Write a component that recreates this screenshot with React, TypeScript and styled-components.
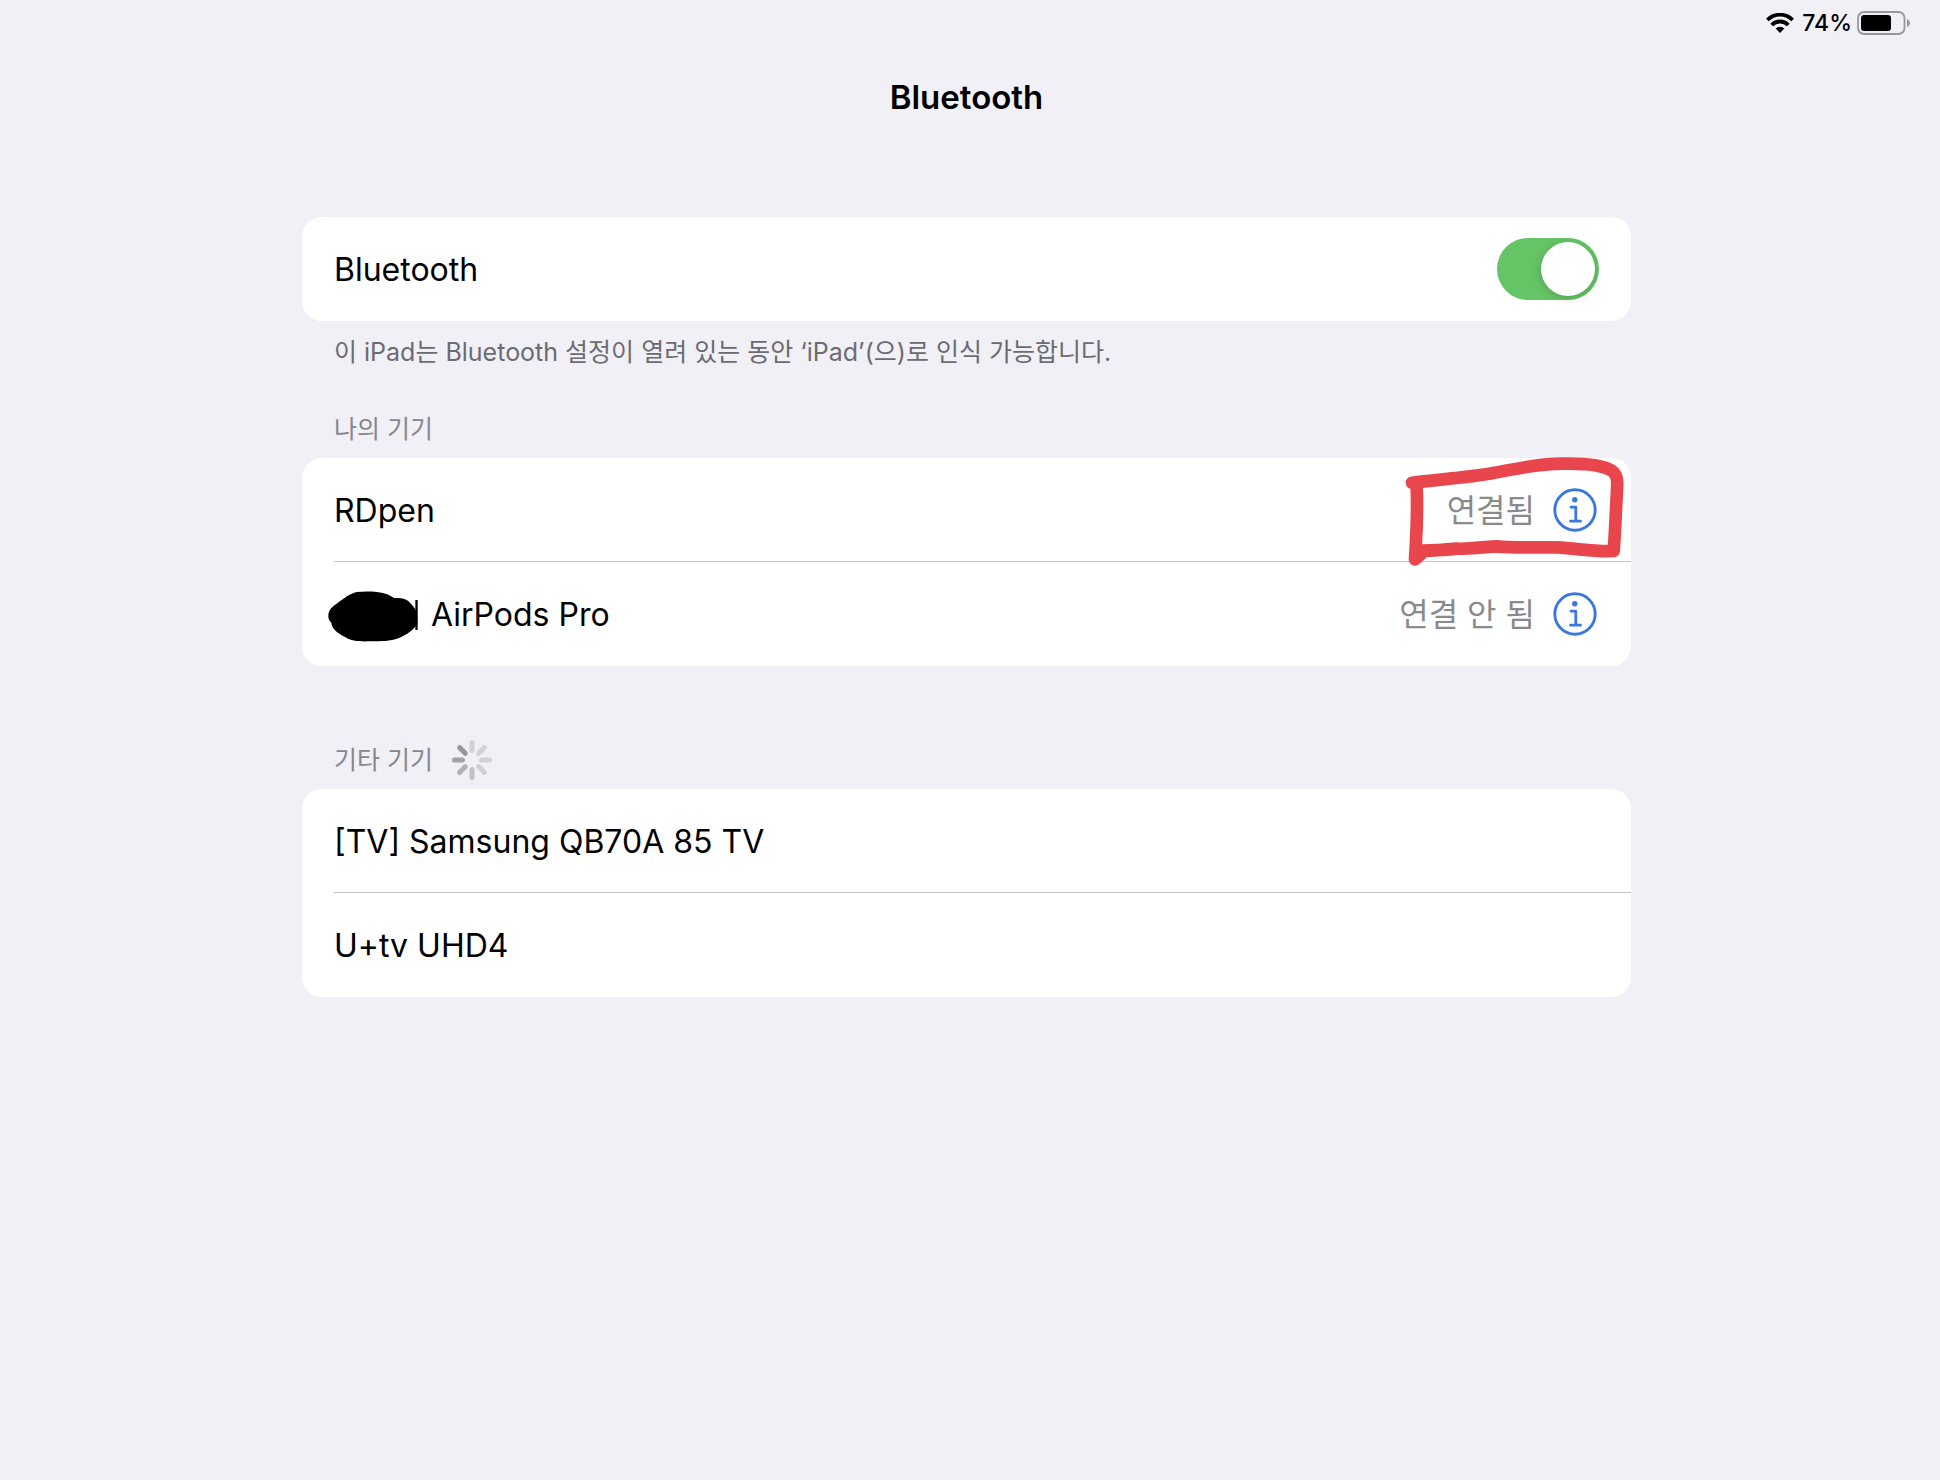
import React, { useState } from 'react';
import styled, { createGlobalStyle } from 'styled-components';

const GlobalStyle = createGlobalStyle`
  *, *::before, *::after { box-sizing: border-box; }
  body {
    margin: 0;
    background: #f1f0f6;
    color: #000;
    font-family: Inter, "Noto Sans CJK KR", sans-serif;
  }
`;

const Page = styled.div`
  min-height: 100vh;
  display: flex;
  flex-direction: column;
`;

const StatusBar = styled.div`
  height: 46px;
  padding-right: 29px;
  display: flex;
  align-items: center;
  justify-content: flex-end;
  font-size: 23px;
  line-height: 28px;
  font-weight: 500;
`;

const WifiIcon = styled.svg`
  width: 28px;
  height: 20px;
  margin-right: 8px;
`;

const BatteryIcon = styled.svg`
  width: 54px;
  height: 24px;
  margin-left: 5px;
`;

const Content = styled.main`
  width: 100%;
  padding-right: 7px;
  display: flex;
  flex-direction: column;
  align-items: center;
`;

const Title = styled.h1`
  margin: 0;
  height: 102px;
  line-height: 102px;
  font-size: 33px;
  font-weight: 600;
`;

const Settings = styled.div`
  width: 100%;
  max-width: 1329px;
  padding-top: 69px;
`;

const Section = styled.section<{ $gap?: number }>`
  margin-top: ${(p) => p.$gap ?? 0}px;
`;

const SectionLabel = styled.h2`
  margin: 0;
  height: 58px;
  padding-left: 32px;
  display: flex;
  align-items: center;
  gap: 19px;
  color: #87868c;
  font-size: 25px;
  line-height: 32px;
  font-weight: 400;
`;

const Footnote = styled.p`
  margin: 0;
  padding: 0 32px;
  line-height: 62px;
  color: #6c6b71;
  font-size: 25px;
`;

const Card = styled.ul`
  margin: 0;
  padding: 0;
  list-style: none;
  background: #fff;
  border-radius: 20px;
`;

const Row = styled.li`
  position: relative;
  height: 104px;
  padding: 0 32px;
  display: flex;
  align-items: center;
  justify-content: space-between;
  font-size: 32px;
  line-height: 39px;

  & + &::before {
    content: "";
    position: absolute;
    top: -1px;
    left: 32px;
    right: 0;
    height: 1px;
    background: #c4c4c7;
  }
`;

const Name = styled.span`
  display: flex;
  align-items: center;
  gap: 11px;
`;

const Trailing = styled.div`
  display: flex;
  align-items: center;
  gap: 18px;
  padding-right: 2px;
  color: #8a8a8d;
`;

const Switch = styled.input`
  appearance: none;
  width: 102px;
  height: 62px;
  margin: 0;
  padding: 4px;
  display: flex;
  justify-content: flex-start;
  border-radius: 31px;
  background: #e9e9eb;
  cursor: pointer;

  &::before {
    content: "";
    width: 54px;
    height: 54px;
    border-radius: 50%;
    background: #fff;
    box-shadow: 0 2px 10px rgba(0, 0, 0, 0.18);
  }

  &:checked {
    justify-content: flex-end;
    background: #65c466;
  }
`;

const InfoButton = styled.button`
  display: flex;
  padding: 0;
  border: 0;
  background: none;
  color: #3b78dc;
  cursor: pointer;

  svg {
    width: 44px;
    height: 44px;
  }
`;

const SpinnerIcon = styled.svg`
  width: 40px;
  height: 40px;
`;

const Redaction = styled.svg`
  width: 93px;
  height: 55px;
  margin-left: -7px;
`;

const Marker = styled.svg`
  position: absolute;
  z-index: 1;
  top: -3px;
  right: 1px;
  width: 225px;
  height: 115px;
  pointer-events: none;
`;

function Wifi() {
  return (
    <WifiIcon viewBox="0 0 28 20" aria-label="Wi-Fi">
      <g fill="none" stroke="#000" strokeWidth="3.8">
        <path d="M1.400 7a17.600 17.600 0 0 1 25.200 0" />
        <path d="M5.700 12a11.600 11.600 0 0 1 16.600 0" />
      </g>
      <path d="M14 20l-4.300-4.400a6.100 6.100 0 0 1 8.600 0z" fill="#000" />
    </WifiIcon>
  );
}

function Battery() {
  return (
    <BatteryIcon viewBox="0 0 54 24" aria-label="Battery">
      <rect x="1" y="1" width="46.5" height="22" rx="6" fill="none" stroke="#98979c" strokeWidth="1.8" />
      <rect x="4" y="4" width="30" height="16" rx="3.2" fill="#000" />
      <path d="M50 8c4 1.400 4 6.600 0 8z" fill="#98979c" />
    </BatteryIcon>
  );
}

function Info({ device }: { device: string }) {
  return (
    <InfoButton type="button" aria-label={`${device} info`}>
      <svg viewBox="0 0 44 44" fill="none" stroke="currentColor">
        <circle cx="22" cy="22" r="20.200" strokeWidth="2.900" />
        <circle cx="21.800" cy="11.700" r="2.700" fill="currentColor" stroke="none" />
        <path d="M18 19.200h4.800v14M17.500 33.200h10" strokeWidth="2.800" strokeLinecap="round" strokeLinejoin="round" />
      </svg>
    </InfoButton>
  );
}

const spokes = ['#d2d1d6', '#d2d1d6', '#d2d1d6', '#d0cfd4', '#c3c2c7', '#b2b1b6', '#a2a1a6', '#96959a'];

function Spinner() {
  return (
    <SpinnerIcon viewBox="-20 -20 40 40" aria-label="Searching">
      {spokes.map((color, i) => (
        <line
          key={i}
          y1="-17.500"
          y2="-9.500"
          stroke={color}
          strokeWidth="5"
          strokeLinecap="round"
          transform={`rotate(${i * 45})`}
        />
      ))}
    </SpinnerIcon>
  );
}

export default function App() {
  const [enabled, setEnabled] = useState(true);

  return (
    <Page>
      <GlobalStyle />
      <StatusBar>
        <Wifi />
        <span>74%</span>
        <Battery />
      </StatusBar>
      <Content>
        <Title>Bluetooth</Title>
        <Settings>
          <Section>
            <Card>
              <Row>
                <label htmlFor="bluetooth">Bluetooth</label>
                <Switch
                  id="bluetooth"
                  type="checkbox"
                  checked={enabled}
                  onChange={(e) => setEnabled(e.target.checked)}
                />
              </Row>
            </Card>
            <Footnote>이 iPad는 Bluetooth 설정이 열려 있는 동안 ‘iPad’(으)로 인식 가능합니다.</Footnote>
          </Section>

          <Section $gap={17}>
            <SectionLabel>나의 기기</SectionLabel>
            <Card>
              <Row>
                <Name>RDpen</Name>
                <Trailing>
                  <span>연결됨</span>
                  <Info device="RDpen" />
                </Trailing>
                <Marker viewBox="75 45 675 345" fill="none" aria-hidden="true">
                  <path
                    d="M96 128C180 118 270 112 340 99C420 84 480 72 545 71C620 69 670 76 695 92C712 104 713 120 711 150C707 220 706 270 701 333C640 336 600 326 530 322C470 322 400 324 350 319C300 320 280 328 230 326C190 330 160 332 128 332L124 342C118 347 110 352 105 358C108 300 114 240 110 138"
                    stroke="#e8464c"
                    strokeWidth="38"
                    strokeLinecap="round"
                    strokeLinejoin="round"
                  />
                </Marker>
              </Row>
              <Row>
                <Name>
                  <Redaction viewBox="111 80 279 165" aria-hidden="true">
                    <path d="M115 165C116 148 125 140 140 130C160 115 180 100 200 95C225 92 255 93 275 97C292 101 303 106 312 113C335 112 350 116 360 127C372 138 380 152 382 165V188C374 208 350 223 325 234C300 243 275 243 240 243C205 244 185 242 165 230C140 217 126 205 124 187C118 182 114 175 115 165Z" />
                    <path d="M379.500 119v90" stroke="#000" strokeWidth="7" />
                  </Redaction>
                  AirPods Pro
                </Name>
                <Trailing>
                  <span>연결 안 됨</span>
                  <Info device="AirPods Pro" />
                </Trailing>
              </Row>
            </Card>
          </Section>

          <Section $gap={65}>
            <SectionLabel>
              기타 기기
              <Spinner />
            </SectionLabel>
            <Card>
              <Row>
                <Name>[TV] Samsung QB70A 85 TV</Name>
              </Row>
              <Row>
                <Name>U+tv UHD4</Name>
              </Row>
            </Card>
          </Section>
        </Settings>
      </Content>
    </Page>
  );
}
